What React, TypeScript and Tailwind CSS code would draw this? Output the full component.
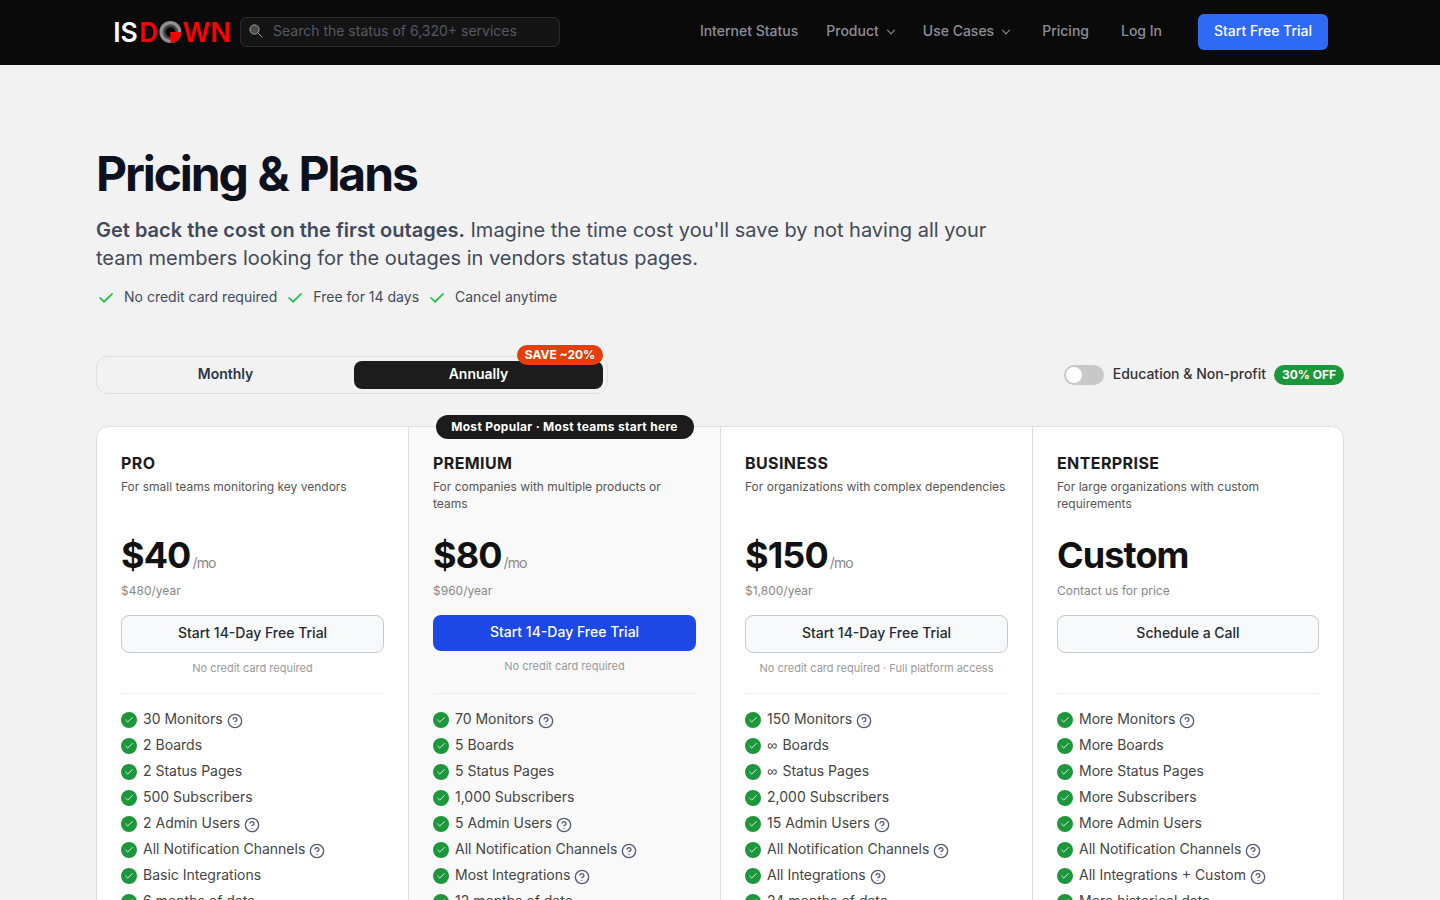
import { useState } from "react";
import { Check, CircleHelp } from "lucide-react";

type Feature = { text: string; help?: boolean };

type Plan = {
  name: string;
  description: string;
  price: string;
  period?: string;
  yearly: string;
  cta: string;
  note?: string;
  popular?: boolean;
  features: Feature[];
};

const plans: Plan[] = [
  {
    name: "PRO",
    description: "For small teams monitoring key vendors",
    price: "$40",
    period: "/mo",
    yearly: "$480/year",
    cta: "Start 14-Day Free Trial",
    note: "No credit card required",
    features: [
      { text: "30 Monitors", help: true },
      { text: "2 Boards" },
      { text: "2 Status Pages" },
      { text: "500 Subscribers" },
      { text: "2 Admin Users", help: true },
      { text: "All Notification Channels", help: true },
      { text: "Basic Integrations" },
      { text: "6 months of data" },
    ],
  },
  {
    name: "PREMIUM",
    description: "For companies with multiple products or teams",
    price: "$80",
    period: "/mo",
    yearly: "$960/year",
    cta: "Start 14-Day Free Trial",
    note: "No credit card required",
    popular: true,
    features: [
      { text: "70 Monitors", help: true },
      { text: "5 Boards" },
      { text: "5 Status Pages" },
      { text: "1,000 Subscribers" },
      { text: "5 Admin Users", help: true },
      { text: "All Notification Channels", help: true },
      { text: "Most Integrations", help: true },
      { text: "12 months of data" },
    ],
  },
  {
    name: "BUSINESS",
    description: "For organizations with complex dependencies",
    price: "$150",
    period: "/mo",
    yearly: "$1,800/year",
    cta: "Start 14-Day Free Trial",
    note: "No credit card required · Full platform access",
    features: [
      { text: "150 Monitors", help: true },
      { text: "∞ Boards" },
      { text: "∞ Status Pages" },
      { text: "2,000 Subscribers" },
      { text: "15 Admin Users", help: true },
      { text: "All Notification Channels", help: true },
      { text: "All Integrations", help: true },
      { text: "24 months of data" },
    ],
  },
  {
    name: "ENTERPRISE",
    description: "For large organizations with custom requirements",
    price: "Custom",
    yearly: "Contact us for price",
    cta: "Schedule a Call",
    features: [
      { text: "More Monitors", help: true },
      { text: "More Boards" },
      { text: "More Status Pages" },
      { text: "More Subscribers" },
      { text: "More Admin Users" },
      { text: "All Notification Channels", help: true },
      { text: "All Integrations + Custom", help: true },
      { text: "More historical data" },
    ],
  },
];

const Logo = () => (
  <svg width="122" height="48" viewBox="0 0 122 48" className="-mr-1 block">
    <defs>
      <radialGradient id="ring">
        <stop offset="0" stopColor="#000000" />
        <stop offset="0.38" stopColor="#050505" />
        <stop offset="0.48" stopColor="#3c3c3c" />
        <stop offset="0.66" stopColor="#505050" />
        <stop offset="0.74" stopColor="#949494" />
        <stop offset="1" stopColor="#8c8c8c" />
      </radialGradient>
    </defs>
    <g fontFamily="Inter, sans-serif" fontSize="27.6" fontWeight="600">
      <text x="1.2" y="33.8" fill="#ffffff" textLength="24.6" lengthAdjust="spacingAndGlyphs">IS</text>
      <text x="27.2" y="33.8" fill="#ff0000" textLength="18.6" lengthAdjust="spacingAndGlyphs">D</text>
      <text x="70.6" y="33.8" fill="#ff0000" textLength="48.4" lengthAdjust="spacingAndGlyphs">WN</text>
    </g>
    <circle cx="58.4" cy="24" r="11" fill="url(#ring)" />
    <path d="M58.4 24h10.8a10.8 10.8 0 0 1-10.8 10.8z" fill="#ff0000" />
  </svg>
);

const Chevron = () => (
  <svg
    width="10"
    height="10"
    viewBox="0 0 10 10"
    fill="none"
    stroke="currentColor"
    strokeWidth="1.1"
    strokeLinecap="round"
    strokeLinejoin="round"
    className="mt-0.5 ml-[7px] mr-px"
  >
    <path d="M1.5 3.2 5 6.8l3.5-3.6" />
  </svg>
);

const Header = () => (
  <header className="h-[65px] bg-[#0a0a0a] text-sm font-medium text-[#8e8e98]">
    <div className="mx-auto flex h-16 w-[1216px] items-center">
      <Logo />
      <div className="ml-2.5 flex h-[30px] w-80 items-center rounded-md border border-[#2a2a2a] bg-[#141414] pl-2">
        <svg width="14" height="14" viewBox="0 0 14 14" fill="none" className="-mt-0.5">
          <circle cx="5.5" cy="5.5" r="4.6" fill="#4b4b4b" stroke="#a3a3a3" />
          <path d="M9 9l4.5 4.5" stroke="#a3a3a3" />
        </svg>
        <span className="mb-0.5 ml-2.5 font-normal text-[#565866]">Search the status of 6,320+ services</span>
      </div>
      <nav className="ml-auto flex h-9 items-center">
        <a className="pb-0.5">Internet Status</a>
        <a className="ml-7 flex items-center pb-0.5">
          Product <Chevron />
        </a>
        <a className="ml-[26px] flex items-center pb-0.5">
          Use Cases <Chevron />
        </a>
        <a className="ml-[30px] pb-0.5">Pricing</a>
        <a className="ml-8 pb-0.5">Log In</a>
        <button className="ml-9 h-9 w-[130px] rounded-md bg-[#2f6af5] pb-0.5 text-white">Start Free Trial</button>
      </nav>
    </div>
  </header>
);

const FeatureText = ({ text }: { text: string }) => {
  if (!text.startsWith("∞")) return <span className="ml-1.5">{text}</span>;
  return (
    <span className="ml-1.5">
      <span className="mr-[1.5px] font-['Liberation_Sans',sans-serif] leading-none">∞</span>
      {text.slice(1)}
    </span>
  );
};

const PlanCard = ({ plan }: { plan: Plan }) => (
  <div
    className={`relative flex w-[312px] flex-col border-r border-[#dddde4] px-6 pt-6 last:w-[310px] last:border-r-0 ${
      plan.popular ? "bg-[#f9f9f9]" : ""
    }`}
  >
    {plan.popular && (
      <div className="absolute -top-3 left-[26.5px] h-6 w-[258px] rounded-full bg-[#1c1c1c] text-center text-xs leading-6 font-bold tracking-[0.3px] whitespace-nowrap text-white">
        Most Popular · Most teams start here
      </div>
    )}
    <h3 className="text-base leading-6 font-bold tracking-[0.4px] text-[#1c1c1c]">{plan.name}</h3>
    <p className="mt-[3px] h-[50px] text-xs leading-[17px] text-[#555555]">{plan.description}</p>
    <div className="mt-[3px] flex h-12 items-baseline tracking-[-0.9px]">
      <span className="text-4xl leading-[48px] font-bold text-[#111111]">{plan.price}</span>
      {plan.period && <span className="ml-0.5 text-sm text-[#888888]">{plan.period}</span>}
    </div>
    <div className="mt-1 text-xs leading-4 text-[#888888]">{plan.yearly}</div>
    <button
      className={`mt-4 w-full rounded-lg pb-0.5 text-sm font-medium ${
        plan.popular
          ? "h-9 bg-[#1d48e5] text-white"
          : "h-[38px] border border-[#c5c9d3] bg-[#f8f9fb] text-[#1f2937]"
      }`}
    >
      {plan.cta}
    </button>
    <div className="mt-[7px] h-4 text-center text-[11px] leading-4 text-[#999999]">{plan.note}</div>
    <ul
      className={`flex flex-col gap-1 border-t border-[#eeeeee] pt-3.5 ${
        plan.popular ? "mt-[19px]" : "mt-[17px]"
      }`}
    >
      {plan.features.map((f) => (
        <li key={f.text} className="flex h-[22px] items-center text-sm leading-[22px] text-[#444444]">
          <span className="mt-0.5 flex size-4 shrink-0 items-center justify-center rounded-full bg-[#1c973c]">
            <Check size={10} strokeWidth={2} className="text-white" />
          </span>
          <FeatureText text={f.text} />
          {f.help && <CircleHelp size={16} className="mt-1 ml-1 text-[#555b72]" />}
        </li>
      ))}
    </ul>
  </div>
);

const App = () => {
  const [annually, setAnnually] = useState(true);
  const [education, setEducation] = useState(false);

  return (
    <div className="h-screen overflow-hidden bg-[#f2f2f2] font-['Inter',sans-serif]">
      <Header />
      <main className="mx-auto w-[1248px] pt-20">
        <h1 className="h-[58px] text-5xl leading-[58px] font-bold tracking-[-2.1px] [word-spacing:1.5px] whitespace-nowrap text-[#0c111d]">
          Pricing &amp; Plans
        </h1>
        <p className="mt-[13px] w-[896px] text-xl leading-7 text-[#414a5a]">
          <strong className="font-semibold">Get back the cost on the first outages.</strong> Imagine the time cost
          you'll save by not having all your team members looking for the outages in vendors status pages.
        </p>
        <div className="mt-[15px] flex h-5 items-center gap-2 text-sm text-[#414a5a]">
          {["No credit card required", "Free for 14 days", "Cancel anytime"].map((t) => (
            <span key={t} className="flex items-center gap-2">
              <svg width="20" height="20" viewBox="0 0 20 20" fill="#22c04e" className="mt-0.5">
                <path d="M16.7 5.3a1 1 0 0 1 0 1.1l-8 8a1 1 0 0 1-1.2 0l-4-4a.8.8 0 0 1 1.1-1.2L8 12.6l7.5-7.4a.8.8 0 0 1 1.2.1z" />
              </svg>
              {t}
            </span>
          ))}
        </div>

        <div className="mt-[49px] flex h-[38px] items-center justify-between text-sm font-semibold">
          <div className="flex h-[38px] w-[512px] rounded-xl border border-[#dfdfe1] p-1">
            <button
              className={`h-7 flex-1 rounded-lg pb-0.5 ${annually ? "text-[#2a3447]" : "bg-[#1c1c1c] text-white"}`}
              onClick={() => setAnnually(false)}
            >
              Monthly
            </button>
            <button
              className={`relative ml-1 h-7 w-[249px] rounded-lg pb-0.5 ${annually ? "bg-[#1c1c1c] text-white" : "text-[#2a3447]"}`}
              onClick={() => setAnnually(true)}
            >
              Annually
              <span className="absolute -top-4 right-0 h-5 w-[86px] rounded-full bg-[#e23f0c] text-xs leading-5 font-bold text-white">
                SAVE ~20%
              </span>
            </button>
          </div>
          <div className="flex items-center font-medium text-[#333333]">
            <button
              className={`h-5 w-10 rounded-full p-0.5 ${education ? "bg-[#1c973c]" : "bg-[#c8c8c8]"}`}
              onClick={() => setEducation(!education)}
            >
              <span className={`block size-4 rounded-full bg-white ${education ? "ml-5" : ""}`} />
            </button>
            <span className="ml-[8.5px] pb-0.5">Education &amp; Non-profit</span>
            <span className="ml-2 h-5 w-[70px] rounded-full bg-[#1c973c] text-center text-xs leading-5 font-bold text-white">
              30% OFF
            </span>
          </div>
        </div>

        <section className="mt-8 flex rounded-xl border border-[#dfdfe1] bg-white pb-10">
          {plans.map((plan) => (
            <PlanCard key={plan.name} plan={plan} />
          ))}
        </section>
      </main>
    </div>
  );
};

export default App;
